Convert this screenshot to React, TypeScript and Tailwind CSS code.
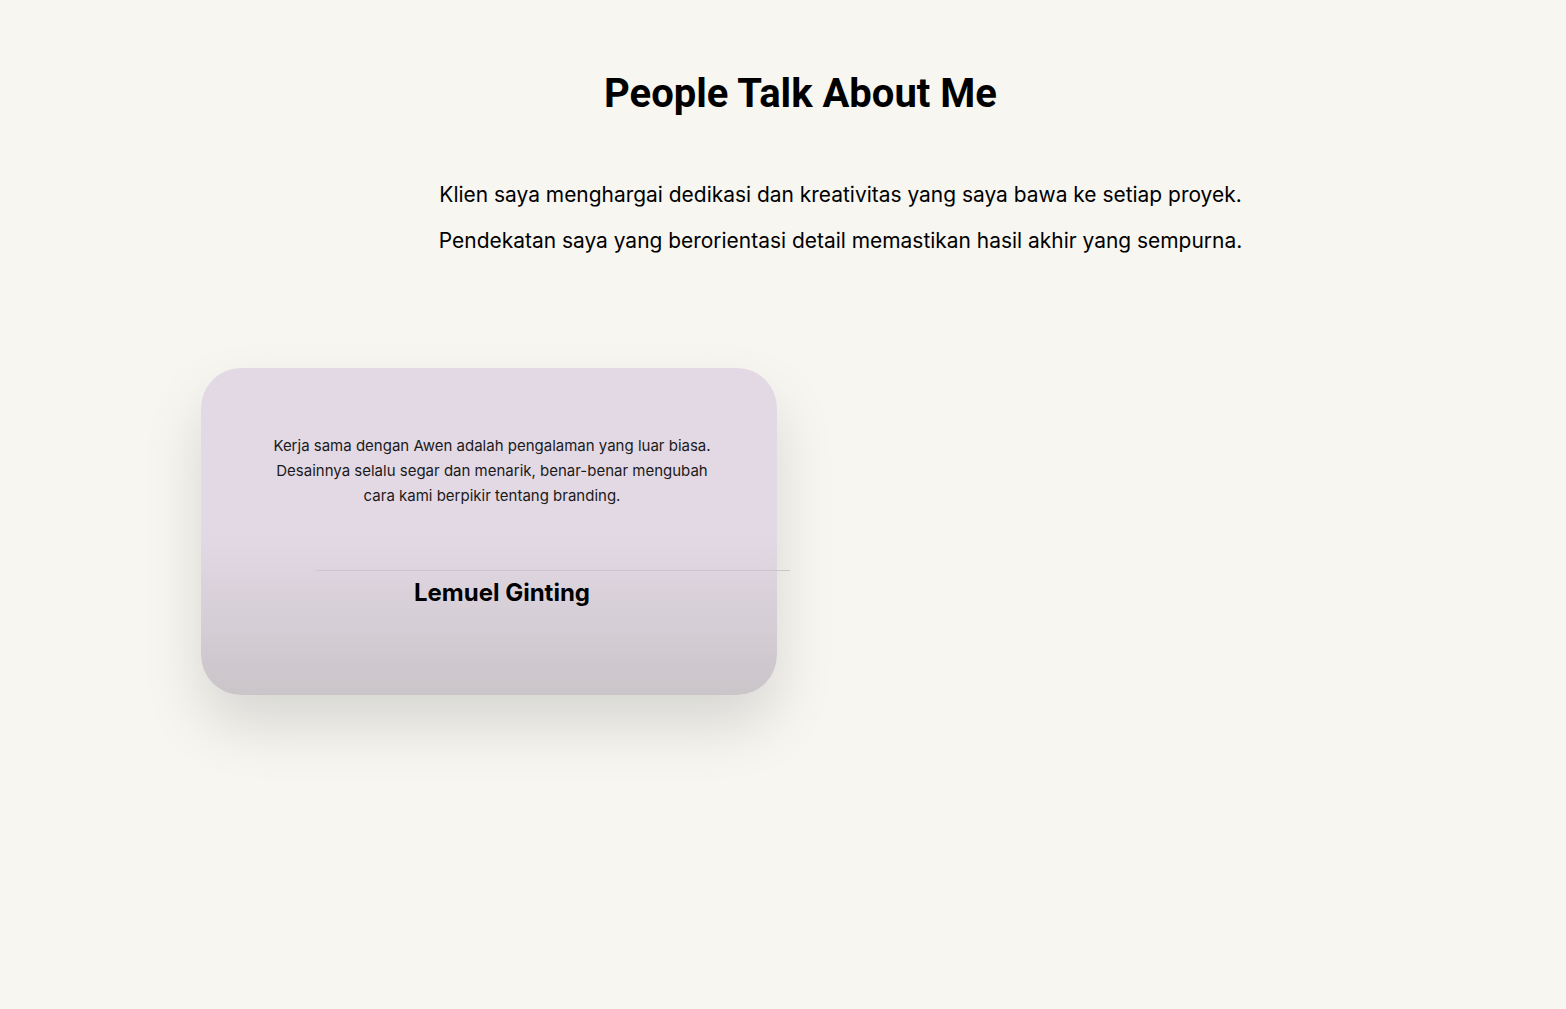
import React from 'react';

const Testimonials: React.FC = () => {
  return (
    <section className="min-h-screen bg-[#f7f6f1] text-black font-['Inter',sans-serif]">
      <h2 className="pt-[68px] pl-[35px] text-center font-['Roboto',sans-serif] text-[40px] font-bold leading-[52px]">
        People Talk About Me
      </h2>

      <div className="mt-[52px] pl-[115px] text-center text-[20.95px] leading-[46px]">
        <p>Klien saya menghargai dedikasi dan kreativitas yang saya bawa ke setiap proyek.</p>
        <p>Pendekatan saya yang berorientasi detail memastikan hasil akhir yang sempurna.</p>
      </div>

      <div className="mt-[104px] pl-[201px]">
        <div className="w-[576px] h-[327px] rounded-[40px] bg-[linear-gradient(180deg,#e3d9e5_50%,#cac5c9_100%)] shadow-[0_30px_60px_rgba(0,0,0,0.13)] pt-[65px]">
          <p className="pl-[6px] text-center text-[15px] leading-[25px] text-[#1a1a1a]">
            Kerja sama dengan Awen adalah pengalaman yang luar biasa.
            <br />
            Desainnya selalu segar dan menarik, benar-benar mengubah
            <br />
            cara kami berpikir tentang branding.
          </p>
          <div className="mt-[62px] ml-[115px] w-[474px] h-px bg-[#cbc7cc]" />
          <h3 className="mt-[6px] pl-[26px] text-center text-[24px] font-bold leading-[32px]">
            Lemuel Ginting
          </h3>
        </div>
      </div>
    </section>
  );
};

export default function App() {
  return <Testimonials />;
}
